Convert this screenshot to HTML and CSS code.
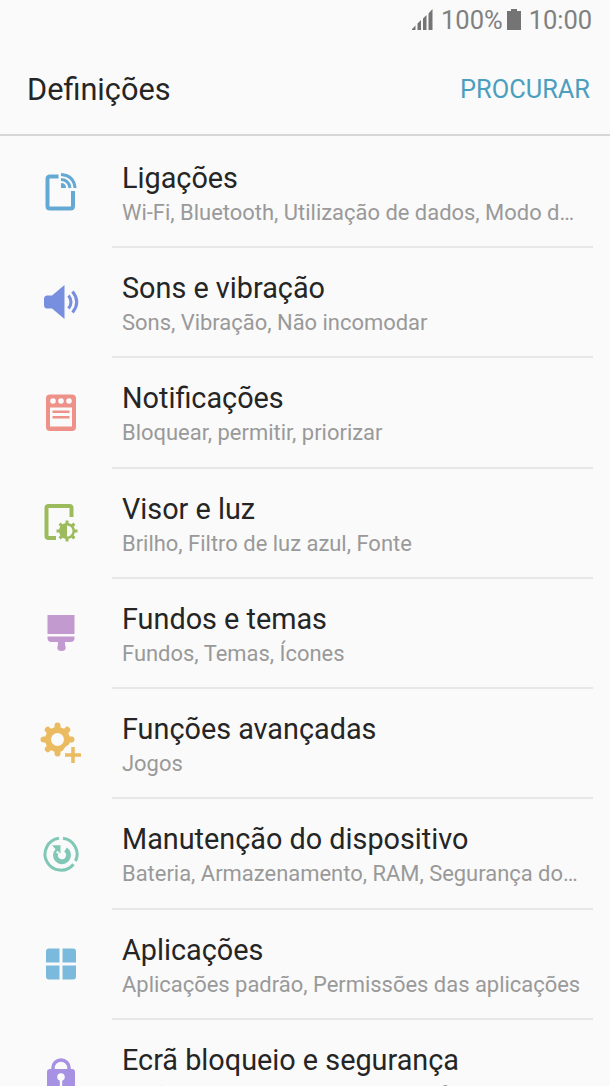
FILE: index.html
```html
<!DOCTYPE html>
<html lang="pt">
<head>
<meta charset="utf-8">
<title>Definições</title>
<link rel="stylesheet" href="styles.css">
</head>
<body>
<div class="status">
<svg class="signal" width="22" height="22" viewBox="0 0 22 22"><path d="M0 22v-1l3.500-3.500V22zM5.500 22v-6.500L9 12v10zM11 22V10.500L14.500 7V22zM16.500 22V5.500L20.500 1v21z"/></svg>
<span class="percent">100%</span>
<svg class="battery" width="14" height="21" viewBox="0 0 14 21"><path d="M4 0h6v2h4v19H0V2h4z"/></svg>
<span class="clock">10:00</span>
</div>
<header class="header"><h1 class="heading">Definições</h1><span class="search">PROCURAR</span></header>
<main class="list">
<div class="row"><svg class="icon blue" viewBox="0 0 60 60"><path class="line" d="M28.500 16.500H20Q17.500 16.500 17.500 19v27Q17.500 48.500 20 48.500h20.500Q43 48.500 43 46V31"/><path d="M31 23q5 0 5 5h-5z"/><path class="line thin" d="M31 19.500q8 .5 9 8.500M31 14.500q13 1 14 13.500"/></svg><div class="text"><div class="title">Ligações</div><div class="sub">Wi-Fi, Bluetooth, Utilização de dados, Modo de voo</div></div></div>
<div class="row"><svg class="icon indigo" viewBox="0 0 60 60"><path d="M16.500 25.500h5.500L34.500 15v34L22 38.500h-5.500Q14 38 14 35v-6q0-3 2.500-3.500z"/><path class="line thin" d="M38.500 25.500q5 6.500 0 13M42.500 21.500q8.500 10.500 0 21"/></svg><div class="text"><div class="title">Sons e vibração</div><div class="sub">Sons, Vibração, Não incomodar</div></div></div>
<div class="row"><svg class="icon coral" viewBox="0 0 60 60"><rect x="16" y="13.500" width="30" height="36.500" rx="4"/><path class="paper" d="M20 26.500h22v19H20z"/><circle class="paper" cx="23" cy="20" r="2.800"/><circle class="paper" cx="31" cy="20" r="2.800"/><circle class="paper" cx="39" cy="20" r="2.800"/><path d="M22.500 29.500h17v2.500h-17zM22.500 35h17v2.500h-17z"/></svg><div class="text"><div class="title">Notificações</div><div class="sub">Bloquear, permitir, priorizar</div></div></div>
<div class="row"><svg class="icon green" viewBox="0 0 60 60"><g transform="translate(0 -1)"><path class="line" d="M26 48h-7.500q-2 0-2-2V18q0-2 2-2h21q2 0 2 2v9"/><circle cx="37" cy="41" r="8"/><path class="line teeth" d="M37 30.500v21M26.500 41h21M29.600 33.600l14.800 14.800M29.600 48.400l14.800-14.800"/><path class="paper" d="M37 35.500a5.500 5.500 0 0 1 0 11z"/></g></svg><div class="text"><div class="title">Visor e luz</div><div class="sub">Brilho, Filtro de luz azul, Fonte</div></div></div>
<div class="row"><svg class="icon purple" viewBox="0 0 60 60"><path d="M17.500 14h27v19h-27zM17.500 35.500h27V37q0 4-4 4h-5.500v2l.7 4q-.2 3-4.200 3t-4.200-3l.7-4v-2h-6.500q-4 0-4-4z"/></svg><div class="text"><div class="title">Fundos e temas</div><div class="sub">Fundos, Temas, Ícones</div></div></div>
<div class="row"><svg class="icon amber" viewBox="0 0 60 60"><circle cx="27.500" cy="28.500" r="12.500"/><path class="line cog" d="M27.500 14.500v28M13.500 28.500h28M17.800 18.800l19.400 19.400M17.800 38.200l19.400-19.400"/><circle class="paper" cx="27.500" cy="28.500" r="6.500"/><circle class="paper" cx="43" cy="44" r="11"/><path class="line plus" d="M43 36v16M35 44h16"/></svg><div class="text"><div class="title">Funções avançadas</div><div class="sub">Jogos</div></div></div>
<div class="row"><svg class="icon teal" viewBox="0 0 60 60"><g transform="translate(0 2.200)"><path class="line ring" d="M33 14.100A16 16 0 0 1 45.500 36.800M43.500 40A16 16 0 1 1 29 14.100"/><path class="line power" d="M35.500 25.500A6.500 6.500 0 1 1 26 28.500"/><path d="M22 21h8.500v8.500l-3-3-2 2.500-2-1 2-3z"/></g></svg><div class="text"><div class="title">Manutenção do dispositivo</div><div class="sub">Bateria, Armazenamento, RAM, Segurança do dispositivo</div></div></div>
<div class="row"><svg class="icon sky" viewBox="0 0 60 60"><path transform="translate(0 2)" d="M19 14.500h10.500V28.500H16v-11q0-3 3-3zM32.500 14.500H43q3 0 3 3v11H32.500zM16 31.500h13.500V45.500H19q-3 0-3-3zM32.500 31.500H46v11q0 3-3 3H32.500z"/></svg><div class="text"><div class="title">Aplicações</div><div class="sub">Aplicações padrão, Permissões das aplicações</div></div></div>
<div class="row"><svg class="icon violet" viewBox="0 0 60 60"><g transform="translate(0 2)"><path class="line lock" d="M23 27v-3a8 8 0 0 1 16 0v3"/><path d="M20 25h22q3 0 3 3v20q0 3-3 3H20q-3 0-3-3V28q0-3 3-3z"/><circle class="paper" cx="31" cy="33" r="3.800"/><path class="paper" d="M29.800 34h2.400v10h-2.400z"/></g></svg><div class="text"><div class="title">Ecrã bloqueio e segurança</div><div class="sub">Ecrã bloqueio, Segurança do telefone</div></div></div>
</main>
</body>
</html>
```
FILE: styles.css
```css
body {
  margin: 0;
  height: 1086px;
  overflow: hidden;
  background: #fafafa;
  font-family: Roboto, sans-serif;
}
.status {
  display: flex;
  height: 40px;
  padding: 0 17px 0 412px;
  align-items: center;
  color: #808080;
  fill: #747474;
  font-size: 25.500px;
  white-space: nowrap;
}
.percent { margin-left: 7px; }
.battery { margin-left: 4px; margin-top: -2px; flex: none; }
.signal { margin-top: -3px; flex: none; }
.clock { margin-left: 8px; }
.header {
  display: flex;
  justify-content: space-between;
  align-items: center;
  box-sizing: border-box;
  height: 96px;
  padding: 4px 20px 0 27px;
  border-bottom: 2px solid #d6d6d6;
}
.heading { margin: 0; font-size: 30.700px; font-weight: 400; color: #252525; }
.search { font-size: 25.400px; color: #4b9fbe; }
.row { display: flex; height: 110.250px; }
.icon { width: 60px; height: 60px; margin: 24px 22px 0 30px; flex: none; fill: currentColor; }
.text {
  box-sizing: border-box;
  width: 481px;
  height: 112px;
  padding: 23.900px 11px 0 10px;
  border-bottom: 2px solid #e7e7e7;
  white-space: nowrap;
}
.title { font-size: 28.800px; line-height: 36px; color: #252525; }
.sub { font-size: 21.950px; line-height: 34px; color: #999; overflow: hidden; text-overflow: ellipsis; }
.line { fill: none; stroke: currentColor; stroke-width: 4; }
.thin { stroke-width: 3; }
.teeth { stroke-width: 3; }
.cog { stroke-width: 6; stroke-linecap: round; }
.plus { stroke-width: 3.500; }
.ring { stroke-width: 3; }
.power { stroke-width: 5; }
.lock { stroke-width: 3.500; }
.paper { fill: #fafafa; }
.blue { color: #64a9d3; }
.indigo { color: #788fe0; }
.coral { color: #ee9188; }
.green { color: #9bbb5c; }
.purple { color: #c39ad0; }
.amber { color: #eabb60; }
.teal { color: #80c8b5; }
.sky { color: #7bb9dd; }
.violet { color: #a691e2; }
```
